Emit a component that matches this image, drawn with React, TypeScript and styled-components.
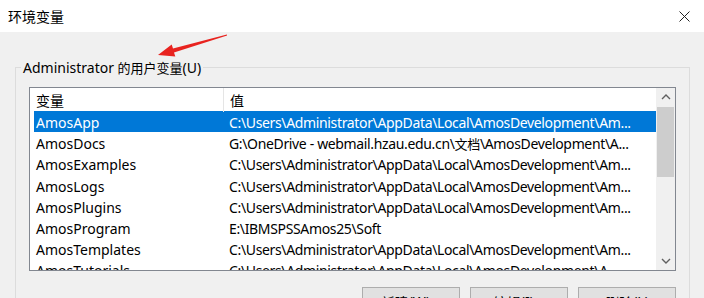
import React from 'react';
import styled, { createGlobalStyle } from 'styled-components';

const GlobalStyle = createGlobalStyle`
  html, body {
    margin: 0;
    padding: 0;
  }
  body {
    width: 704px;
    height: 298px;
    overflow: hidden;
    background: #f0f0f0;
    font-family: "Noto Sans", "Noto Sans CJK SC", sans-serif;
    color: #000;
  }
`;

const Window = styled.div`
  position: relative;
  width: 704px;
  height: 298px;
  overflow: hidden;
  background: #f0f0f0;
`;

const TitleBar = styled.div`
  height: 32px;
  background: #fff;
  display: flex;
  align-items: center;
  justify-content: space-between;
  padding-left: 8px;
`;

const Title = styled.div`
  font-family: "Noto Sans CJK SC", sans-serif;
  font-size: 14px;
  line-height: 20px;
  color: #000;
`;

const CloseButton = styled.div`
  width: 40px;
  height: 32px;
  display: flex;
  align-items: center;
  justify-content: center;
`;

const Body = styled.div`
  padding: 26px 14px 0 15px;
`;

const Group = styled.fieldset`
  margin: 0;
  padding: 10px 13px 40px 13px;
  border: 1px solid #dcdcdc;
  min-width: 0;
`;

const Legend = styled.legend`
  margin-left: -8px;
  padding: 0 2px;
  font-size: 14px;
  line-height: 19px;
  color: #000;
  white-space: nowrap;
`;

const Cjk = styled.span<{ size?: number }>`
  font-family: "Noto Sans CJK SC", sans-serif;
  font-size: ${({ size }) => size || 13}px;
`;

const ListBox = styled.div`
  height: 184px;
  box-sizing: border-box;
  border: 1px solid #828790;
  background: #fff;
  display: flex;
  overflow: hidden;
`;

const ListArea = styled.div`
  flex: 1;
  min-width: 0;
  overflow: hidden;
`;

const Header = styled.div`
  height: 23px;
  display: grid;
  grid-template-columns: 193px 1fr;
`;

const HeaderCell = styled.div<{ divider?: boolean }>`
  padding-left: 6px;
  font-family: "Noto Sans CJK SC", sans-serif;
  font-size: 14px;
  line-height: 24px;
  border-left: ${({ divider }) => (divider ? '1px solid #e5e5e5' : 'none')};
`;

const Rows = styled.div`
  padding-left: 4px;
`;

const Row = styled.div<{ selected?: boolean }>`
  height: 21.2px;
  box-sizing: border-box;
  padding-top: 1px;
  display: grid;
  grid-template-columns: 189px 1fr;
  align-items: start;
  font-size: 14px;
  line-height: 21px;
  white-space: nowrap;
  background: ${({ selected }) => (selected ? '#0078d7' : 'transparent')};
  color: ${({ selected }) => (selected ? '#fff' : '#000')};
`;

const NameCell = styled.div`
  padding-left: 2px;
  overflow: hidden;
`;

const ValueCell = styled.div`
  padding-left: 6px;
  letter-spacing: -0.35px;
  overflow: hidden;
`;

const Scrollbar = styled.div`
  width: 19px;
  flex-shrink: 0;
  background: #f0f0f0;
  display: flex;
  flex-direction: column;
`;

const ScrollArrow = styled.div`
  height: 18px;
  display: flex;
  align-items: center;
  justify-content: center;
`;

const Track = styled.div`
  flex: 1;
  display: flex;
  flex-direction: column;
  padding: 1px 1px 0 1px;
`;

const Thumb = styled.div`
  height: 70px;
  background: #cdcdcd;
`;

const ButtonRow = styled.div`
  margin-top: 16px;
  display: flex;
  justify-content: flex-end;
  gap: 10px;
`;

const Button = styled.div`
  width: 98px;
  height: 30px;
  box-sizing: border-box;
  border: 1px solid #adadad;
  background: #e1e1e1;
  display: flex;
  align-items: center;
  justify-content: center;
  font-size: 14px;
  line-height: 20px;
`;

const ArrowOverlay = styled.svg`
  position: absolute;
  left: 0;
  top: 0;
  pointer-events: none;
`;

type Variable = { name: string; value: React.ReactNode };

const longPath = 'C:\\Users\\Administrator\\AppData\\Local\\AmosDevelopment\\Am...';

const variables: Variable[] = [
  { name: 'AmosApp', value: longPath },
  {
    name: 'AmosDocs',
    value: (
      <>
        G:\OneDrive - webmail.hzau.edu.cn\<Cjk>文档</Cjk>\AmosDevelopment\A...
      </>
    ),
  },
  { name: 'AmosExamples', value: longPath },
  { name: 'AmosLogs', value: longPath },
  { name: 'AmosPlugins', value: longPath },
  { name: 'AmosProgram', value: 'E:\\IBMSPSSAmos25\\Soft' },
  { name: 'AmosTemplates', value: longPath },
  { name: 'AmosTutorials', value: 'C:\\Users\\Administrator\\AppData\\Local\\AmosDevelopment\\A...' },
];

const Chevron = ({ up }: { up?: boolean }) => (
  <svg width="10" height="6" viewBox="0 0 10 6">
    <polyline
      points={up ? '1,5 5,1 9,5' : '1,1 5,5 9,1'}
      fill="none"
      stroke="#606060"
      strokeWidth="1.4"
    />
  </svg>
);

export default function App() {
  return (
    <>
      <GlobalStyle />
      <Window>
        <TitleBar>
          <Title>环境变量</Title>
          <CloseButton>
            <svg width="11" height="11" viewBox="0 0 11 11">
              <path d="M0.5 0.5 L10.5 10.5 M10.5 0.5 L0.5 10.5" stroke="#222" strokeWidth="1" />
            </svg>
          </CloseButton>
        </TitleBar>
        <Body>
          <Group>
            <Legend>
              Administrator <Cjk>的用户变量</Cjk>(U)
            </Legend>
            <ListBox>
              <ListArea>
                <Header>
                  <HeaderCell>变量</HeaderCell>
                  <HeaderCell divider>值</HeaderCell>
                </Header>
                <Rows>
                  {variables.map((v, i) => (
                    <Row key={v.name} selected={i === 0}>
                      <NameCell>{v.name}</NameCell>
                      <ValueCell>{v.value}</ValueCell>
                    </Row>
                  ))}
                </Rows>
              </ListArea>
              <Scrollbar>
                <ScrollArrow>
                  <Chevron up />
                </ScrollArrow>
                <Track>
                  <Thumb />
                </Track>
                <ScrollArrow>
                  <Chevron />
                </ScrollArrow>
              </Scrollbar>
            </ListBox>
            <ButtonRow>
              <Button>
                <Cjk size={14}>新建</Cjk>(W)...
              </Button>
              <Button>
                <Cjk size={14}>编辑</Cjk>(I)...
              </Button>
              <Button>
                <Cjk size={14}>删除</Cjk>(L)
              </Button>
            </ButtonRow>
          </Group>
        </Body>
        <ArrowOverlay width="704" height="298" viewBox="0 0 704 298">
          <path
            d="M158 55 L171.7 44.6 L173 48.6 L226.9 34.4 L227.1 35.6 L174 52.4 L175.3 56.4 Z"
            fill="#e8231f"
          />
        </ArrowOverlay>
      </Window>
    </>
  );
}
